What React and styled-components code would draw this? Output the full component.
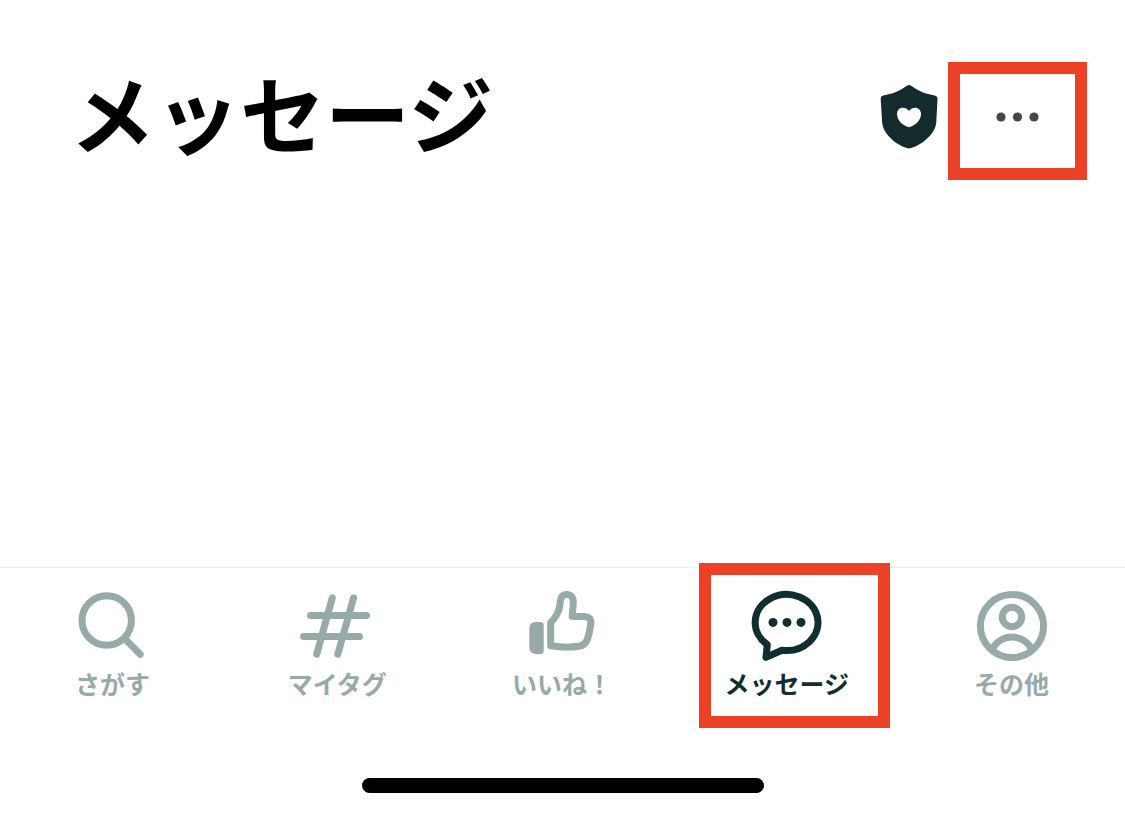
import React, { useState } from 'react';
import styled, { createGlobalStyle } from 'styled-components';

const GlobalStyle = createGlobalStyle`
  * {
    box-sizing: border-box;
  }

  body {
    margin: 0;
    background-color: #fff;
    font-family: "Noto Sans CJK JP", sans-serif;
  }
`;

const PageContainer = styled.div`
  display: flex;
  flex-direction: column;
  min-height: 100vh;
`;

const Header = styled.header`
  display: flex;
  align-items: flex-start;
  padding: 62px 38px 0 70px;
`;

const Title = styled.h1`
  flex: 1;
  margin: 0;
  color: #000;
  font-size: 85px;
  font-weight: 700;
  line-height: 98px;
`;

const IconButton = styled.button`
  display: flex;
  padding: 22px 0;
  margin-right: 10px;
  border: none;
  background: none;
  color: #142b2e;
  cursor: pointer;
`;

const MenuButton = styled.button`
  display: flex;
  align-items: center;
  justify-content: center;
  width: 139px;
  height: 118px;
  padding: 0 0 8px;
  border: 12px solid #ec4126;
  background: none;
  color: #42474b;
  cursor: pointer;
`;

const Content = styled.main`
  flex: 1;
`;

const TabBar = styled.nav`
  display: flex;
  padding: 20px 1px 0 0;
  border-top: 1px solid #ebeeee;
`;

const Tab = styled.a`
  position: relative;
  flex: 1;
  display: flex;
  flex-direction: column;
  align-items: center;
  gap: 3px;
  color: ${(props) => (props.$active ? '#112d30' : '#97aaa9')};
  text-decoration: none;
`;

const TabLabel = styled.span`
  font-size: 25px;
  font-weight: 600;
  line-height: 32px;
  white-space: nowrap;
`;

// Marker frame drawn over the tab
const Highlight = styled.span`
  position: absolute;
  top: -25px;
  left: 25px;
  right: 9px;
  height: 165px;
  border: 12px solid #ec4126;
  pointer-events: none;
`;

const HomeIndicator = styled.div`
  width: 402px;
  max-width: 80%;
  height: 15px;
  margin: 79px auto 24px;
  border-radius: 8px;
  background-color: #000;
`;

const TabSvg = styled.svg`
  width: 80px;
  height: 76px;
  fill: none;
  stroke: currentColor;
  stroke-width: 7;
  stroke-linecap: round;
  stroke-linejoin: round;
`;

const SearchIcon = () => (
  <TabSvg viewBox="0 0 80 76" aria-hidden="true">
    <circle cx="34.7" cy="32.5" r="24.7" />
    <path d="M53 51 68.2 66.2" />
  </TabSvg>
);

const HashIcon = () => (
  <TabSvg viewBox="0 0 80 76" aria-hidden="true">
    <path d="M13.5 27.4H69.5M6.5 48.6H62.5M35.3 9.8 19.7 66.2M56.6 9.8 40.8 66.2" />
  </TabSvg>
);

const LikeIcon = () => (
  <TabSvg viewBox="0 0 80 76" aria-hidden="true">
    <path
      d="M13.5 34H18.5Q21.7 34 21.7 37.2V62.8Q21.7 66 18.5 66H14Q7.3 66 7.3 59V41Q7.3 34 13.5 34Z"
      fill="currentColor"
      stroke="none"
    />
    <path d="M28.7 57.8V34.6C32.4 30.6 35.8 25.6 37.2 20.5C38.2 16.5 38 14.4 38.6 11.5C39.2 8.2 41.6 6.4 45 6.5C49 6.6 51.4 9.5 51.3 14C51.3 19 50.4 23 50.2 28.4H62C66.8 28.4 69.4 31.2 68.8 36C68.2 41 67.2 46 65.5 51C63.9 55.4 61.2 57.6 57 58.3C48 59.6 37.5 59.2 28.7 57.8Z" />
  </TabSvg>
);

const MessageIcon = () => (
  <TabSvg viewBox="0 0 80 76" aria-hidden="true">
    <path d="M35 62.2A31.4 28 0 1 0 20.3 56.6L19 69.3Z" />
    <g fill="currentColor" stroke="none">
      <circle cx="26" cy="34.4" r="4.5" />
      <circle cx="40" cy="34.4" r="4.5" />
      <circle cx="54" cy="34.4" r="4.5" />
    </g>
  </TabSvg>
);

const ProfileIcon = () => (
  <TabSvg viewBox="0 0 80 76" aria-hidden="true">
    <circle cx="40" cy="38" r="31.6" />
    <circle cx="40" cy="29" r="9.7" />
    <path d="M20.3 61.3A22 22 0 0 1 59.7 61.3" strokeLinecap="butt" />
  </TabSvg>
);

const ShieldIcon = () => (
  <svg width="58" height="66" viewBox="0 0 58 66" fill="currentColor" aria-hidden="true">
    <path
      fillRule="evenodd"
      d="M26.8 1.8Q29 .3 31.2 1.8C38 6.8 46 10.3 54.6 11.4Q57.6 11.9 57.5 15L56.3 38C55.8 49 43 60.5 31 64.1Q29 64.7 27 64.1C15 60.5 2.7 49 2.1 38L.7 15Q.6 11.9 3.4 11.4C12 10.3 20 6.8 26.8 1.8ZM29 27C27.3 24.6 25 23.7 22.7 23.7C19.5 23.7 17 26.2 17 30C17 36.5 22.7 41.5 29 43.2C35.3 41.5 41 36.5 41 30C41 26.2 38.5 23.7 35.3 23.7C33 23.7 30.7 24.6 29 27Z"
    />
  </svg>
);

const DotsIcon = () => (
  <svg width="44" height="10" viewBox="0 0 44 10" fill="currentColor" aria-hidden="true">
    <circle cx="5" cy="5" r="4.6" />
    <circle cx="21.5" cy="5" r="4.6" />
    <circle cx="38" cy="5" r="4.6" />
  </svg>
);

const tabs = [
  { id: 'search', label: 'さがす', Icon: SearchIcon },
  { id: 'tags', label: 'マイタグ', Icon: HashIcon },
  { id: 'likes', label: 'いいね！', Icon: LikeIcon },
  { id: 'messages', label: 'メッセージ', Icon: MessageIcon, highlighted: true },
  { id: 'others', label: 'その他', Icon: ProfileIcon },
];

function App() {
  const [activeTab, setActiveTab] = useState('messages');

  return (
    <PageContainer lang="ja">
      <GlobalStyle />
      <Header>
        <Title>メッセージ</Title>
        <IconButton type="button" aria-label="安心・安全">
          <ShieldIcon />
        </IconButton>
        <MenuButton type="button" aria-label="メニュー">
          <DotsIcon />
        </MenuButton>
      </Header>
      <Content />
      <TabBar>
        {tabs.map(({ id, label, Icon, highlighted }) => (
          <Tab
            key={id}
            href={`#${id}`}
            $active={id === activeTab}
            aria-current={id === activeTab ? 'page' : undefined}
            onClick={() => setActiveTab(id)}
          >
            <Icon />
            <TabLabel>{label}</TabLabel>
            {highlighted && <Highlight />}
          </Tab>
        ))}
      </TabBar>
      <HomeIndicator />
    </PageContainer>
  );
}

export default App;
